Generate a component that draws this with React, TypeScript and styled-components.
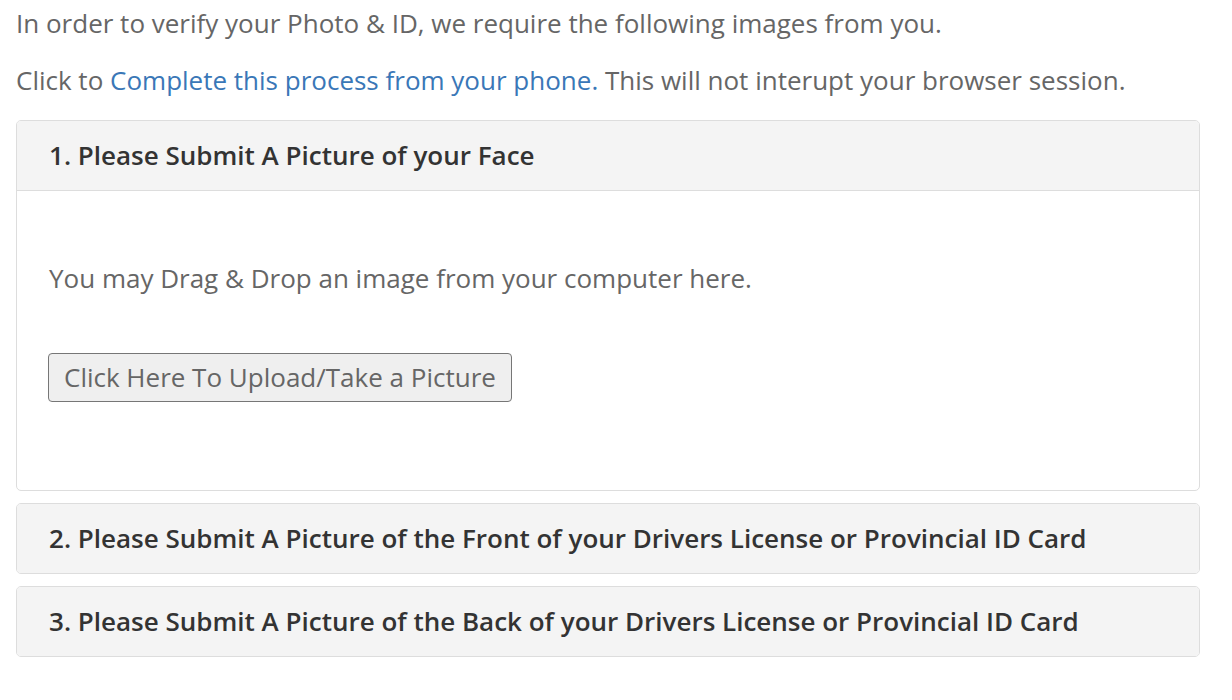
import React from 'react';
import styled, { createGlobalStyle } from 'styled-components';

const GlobalStyle = createGlobalStyle`
  body {
    margin: 0;
    background: #ffffff;
    font-family: "Open Sans", "Noto Sans", sans-serif;
    color: #666666;
  }
`;

const Page = styled.div`
  width: 1184px;
  padding: 0 16px;
`;

const Intro = styled.p`
  margin: 0;
  font-size: 26px;
  line-height: 36px;
  padding-top: 5px;
  &:nth-of-type(2) {
    padding-top: 21px;
  }
`;

const Link = styled.a`
  color: #3a77b7;
  text-decoration: none;
`;

const Panels = styled.div`
  display: flex;
  flex-direction: column;
  gap: 12px;
  margin-top: 22px;
`;

const Panel = styled.section`
  border: 1px solid #dddddd;
  border-radius: 5px;
  background: #ffffff;
  overflow: hidden;
`;

const PanelHeading = styled.h3<{ open?: boolean }>`
  margin: 0;
  padding: 16px 32px;
  background: #f4f4f4;
  border-bottom: ${({ open }) => (open ? '1px solid #dddddd' : 'none')};
  font-size: 26px;
  line-height: 37px;
  font-weight: 600;
  color: #333333;
`;

const PanelBody = styled.div`
  padding: 69px 32px 88px 31px;
`;

const DropText = styled.p`
  margin: 0 0 57px 1px;
  font-size: 26px;
  line-height: 36px;
`;

const UploadButton = styled.button`
  font-family: "Open Sans", "Noto Sans", sans-serif;
  font-size: 26px;
  line-height: 37px;
  color: #666666;
  background: #efefef;
  border: 1px solid #767676;
  border-radius: 4px;
  padding: 5px 15px;
  cursor: pointer;
`;

const steps = [
  'Please Submit A Picture of your Face',
  'Please Submit A Picture of the Front of your Drivers License or Provincial ID Card',
  'Please Submit A Picture of the Back of your Drivers License or Provincial ID Card',
];

export default function App() {
  return (
    <Page>
      <GlobalStyle />
      <Intro>In order to verify your Photo &amp; ID, we require the following images from you.</Intro>
      <Intro>
        Click to <Link href="#">Complete this process from your phone.</Link> This will not interupt your browser session.
      </Intro>
      <Panels>
        {steps.map((title, i) => (
          <Panel key={i}>
            <PanelHeading open={i === 0}>
              {i + 1}. {title}
            </PanelHeading>
            {i === 0 && (
              <PanelBody>
                <DropText>You may Drag &amp; Drop an image from your computer here.</DropText>
                <UploadButton>Click Here To Upload/Take a Picture</UploadButton>
              </PanelBody>
            )}
          </Panel>
        ))}
      </Panels>
    </Page>
  );
}
